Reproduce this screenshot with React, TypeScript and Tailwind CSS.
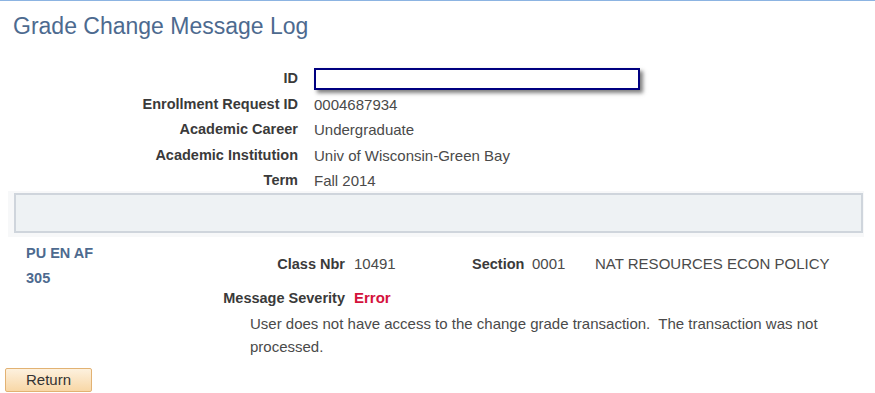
export default function App() {
  const rows = [
    { label: "Enrollment Request ID", value: "0004687934", h: "h-[25.5px]" },
    { label: "Academic Career", value: "Undergraduate", h: "h-[25.5px]" },
    { label: "Academic Institution", value: "Univ of Wisconsin-Green Bay", h: "h-[25.5px]" },
    { label: "Term", value: "Fall 2014", h: "h-[22.5px]" },
  ];

  return (
    <div className="w-[875px] h-[393px] overflow-hidden bg-white border-t border-[#8cb4e2] font-['Liberation_Sans',Arial,sans-serif] text-[15px] text-[#4a4a4a]">
      {/* Title */}
      <h1 className="pl-[13px] pt-[12px] text-[23px] leading-[26px] text-[#4d6a8f]">Grade Change Message Log</h1>

      {/* Header fields */}
      <div className="mt-[27px] grid grid-cols-[298px_1fr] gap-x-4">
        <div className="h-[25.5px] flex items-center justify-end font-bold text-[14.5px] text-[#3a3a3a]">ID</div>
        <div className="h-[25.5px] flex items-center">
          <input
            type="text"
            className="w-[326px] h-[22px] bg-white border-2 border-[#000080] shadow-[3px_3px_4px_rgba(0,0,0,0.5)] outline-none"
          />
        </div>
        {rows.map((r) => (
          <div key={r.label} className="contents">
            <div className={`${r.h} leading-[25.5px] text-right font-bold text-[14.5px] text-[#3a3a3a]`}>{r.label}</div>
            <div className={`${r.h} leading-[25.5px]`}>{r.value}</div>
          </div>
        ))}
      </div>

      {/* Gray band */}
      <div className="ml-2 w-[856px] bg-[#f7f8f9] pt-[2px] pb-[4px] pl-[6px] pr-px">
        <div className="h-[40px] bg-[#eef2f4] border-2 border-[#cfd5dc]" />
      </div>

      {/* Detail */}
      <div className="flex">
        <div className="w-[205px] pl-[26px] pt-[4px] leading-[25px] font-bold text-[14.5px] text-[#4d6a8f]">
          <div>PU EN AF</div>
          <div>305</div>
        </div>
        <div className="flex-1">
          <div className="mt-[14px] h-[25px] flex items-baseline leading-[25px]">
            <div className="w-[140px] text-right font-bold text-[14.5px] text-[#3a3a3a]">Class Nbr</div>
            <div className="ml-[9px] w-[118px]">10491</div>
            <div className="w-[60px] font-bold text-[14.5px] text-[#3a3a3a]">Section</div>
            <div className="w-[63px]">0001</div>
            <div>NAT RESOURCES ECON POLICY</div>
          </div>
          <div className="mt-[9px] h-[25px] flex items-baseline leading-[25px]">
            <div className="w-[140px] text-right font-bold text-[14.5px] text-[#3a3a3a]">Message Severity</div>
            <div className="ml-[9px] font-bold text-[#d4123c]">Error</div>
          </div>
          <p className="mt-[2px] pl-[45px] w-[635px] leading-[23px] whitespace-pre-wrap">
            User does not have access to the change grade transaction.  The transaction was not processed.
          </p>
        </div>
      </div>

      {/* Return */}
      <button className="mt-[10px] ml-[5px] w-[87px] h-[24px] rounded-[2px] border border-[#e2b273] bg-gradient-to-b from-[#fdf1de] to-[#f8d7a6] text-[15px] text-[#333]">
        Return
      </button>
    </div>
  );
}
